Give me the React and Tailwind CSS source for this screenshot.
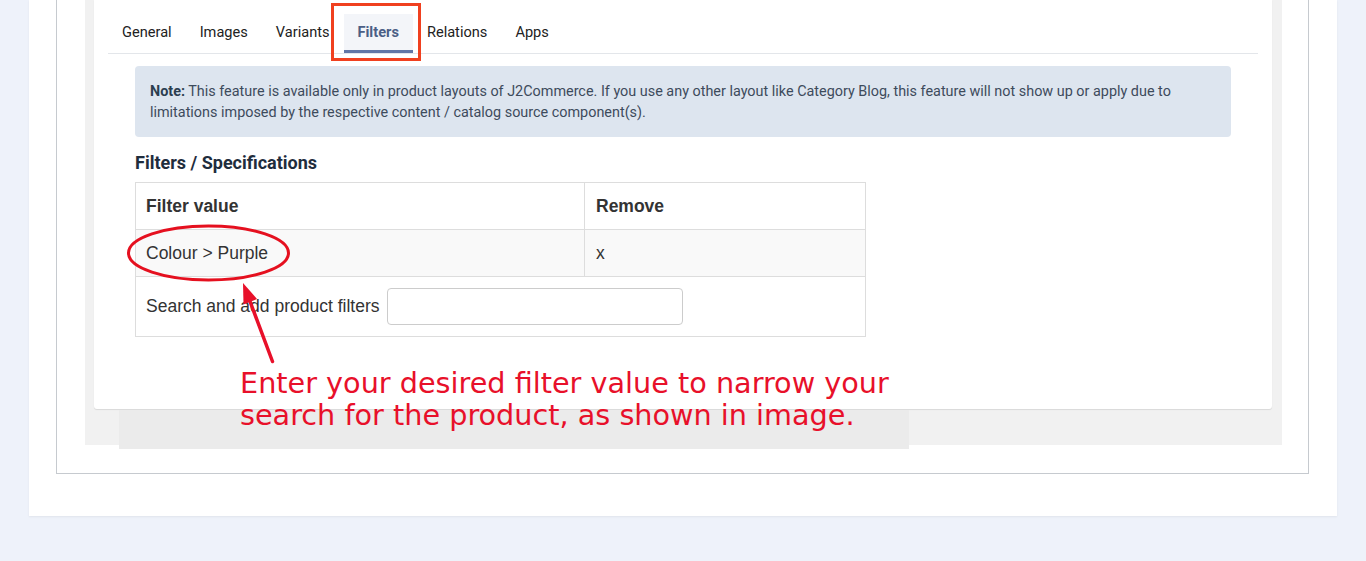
import React from 'react';

const tabs = ['General', 'Images', 'Variants', 'Filters', 'Relations', 'Apps'];

function Tabs() {
    return (
        <div className="flex border-b border-[#e3e6ea]">
            {tabs.map(t => (
                <div
                    key={t}
                    className={`flex h-[39px] items-center border-b-[3px] px-[14px] pt-[2px] text-[14.6px] ${t === 'Filters' ? 'border-[#6176a6] bg-[#f3f5f9] font-bold text-[#4b5f86]' : 'border-transparent text-[#222]'}`}
                >
                    {t}
                </div>
            ))}
        </div>
    );
}

function FilterTable() {
    return (
        <div className="w-[731px] border border-[#dddddd] font-['Liberation_Sans',Arial,sans-serif] text-[17.5px] text-[#333]">
            <div className="flex h-[47px] border-b border-[#dddddd] font-bold">
                <div className="flex w-[449px] items-center border-r border-[#dddddd] pl-[10px]">Filter value</div>
                <div className="flex flex-1 items-center pl-[11px]">Remove</div>
            </div>
            <div className="flex h-[47px] border-b border-[#dddddd] bg-[#f9f9f9]">
                <div className="flex w-[449px] items-center border-r border-[#dddddd] pl-[10px]">Colour &gt; Purple</div>
                <div className="flex flex-1 items-center pl-[11px]">x</div>
            </div>
            <div className="flex h-[59px] items-center pl-[10px]">
                <span>Search and add product filters</span>
                <input type="text" className="ml-[8px] h-[37px] w-[296px] rounded-[4px] border border-[#cccccc] bg-white" />
            </div>
        </div>
    );
}

export default function App() {
    return (
        <div className="relative h-[561px] w-[1366px] overflow-hidden bg-[#eef2fa] font-['Roboto',sans-serif]">
            <div className="ml-[29px] h-[516px] w-[1308px] bg-white shadow-[0_1px_2px_rgba(0,0,0,0.06)]">
                <div className="ml-[27px] h-[474px] w-[1253px] border-x border-b border-[#c6cacf]">
                    <div className="ml-[28px] h-[445px] w-[1197px] bg-[#f1f1f1]">
                        <div className="ml-[9px] h-[409px] w-[1178px] rounded-b-[3px] bg-white px-[14px] pt-[14px] shadow-[0_1px_1px_rgba(0,0,0,0.1)]">
                            <Tabs />
                            <div className="px-[27px]">
                                <div className="mt-[12px] rounded-[4px] bg-[#dde5ef] px-[15px] pb-[14px] pt-[15px] text-[14.4px] leading-[21px] text-[#3d4b5c]">
                                    <b className="text-[#2c3e50]">Note:</b> This feature is available only in product layouts of J2Commerce. If you use any other layout like Category Blog, this feature will not show up or apply due to limitations imposed by the respective content / catalog source component(s).
                                </div>
                                <h3 className="mb-[7px] mt-[14px] text-[18px] font-bold leading-[24px] text-[#1f2d3d]">Filters / Specifications</h3>
                                <FilterTable />
                            </div>
                        </div>
                    </div>
                </div>
            </div>

            {/* annotation overlay */}
            <div className="absolute left-[331px] top-[3px] h-[58px] w-[90px] border-[3px] border-[#f0401f]" />
            <div className="absolute left-[119px] top-[410px] h-[39px] w-[790px] bg-[#ebebeb]" />
            <div className="absolute left-[240px] top-[367px] font-['DejaVu_Sans',sans-serif] text-[28.7px] leading-[32.4px] text-[#e8102a]">
                <div>Enter your desired filter value to narrow your</div>
                <div>search for the product, as shown in image.</div>
            </div>
            <svg className="pointer-events-none absolute left-0 top-0" width="1366" height="561">
                <ellipse cx="208.5" cy="253" rx="80" ry="27" fill="none" stroke="#e5101f" strokeWidth="3" />
                <line x1="272.5" y1="361.5" x2="248" y2="296" stroke="#e8102a" strokeWidth="3.5" strokeLinecap="round" />
                <polygon points="243,283 257,299 243.5,304.5" fill="#e8102a" />
            </svg>
        </div>
    );
}
